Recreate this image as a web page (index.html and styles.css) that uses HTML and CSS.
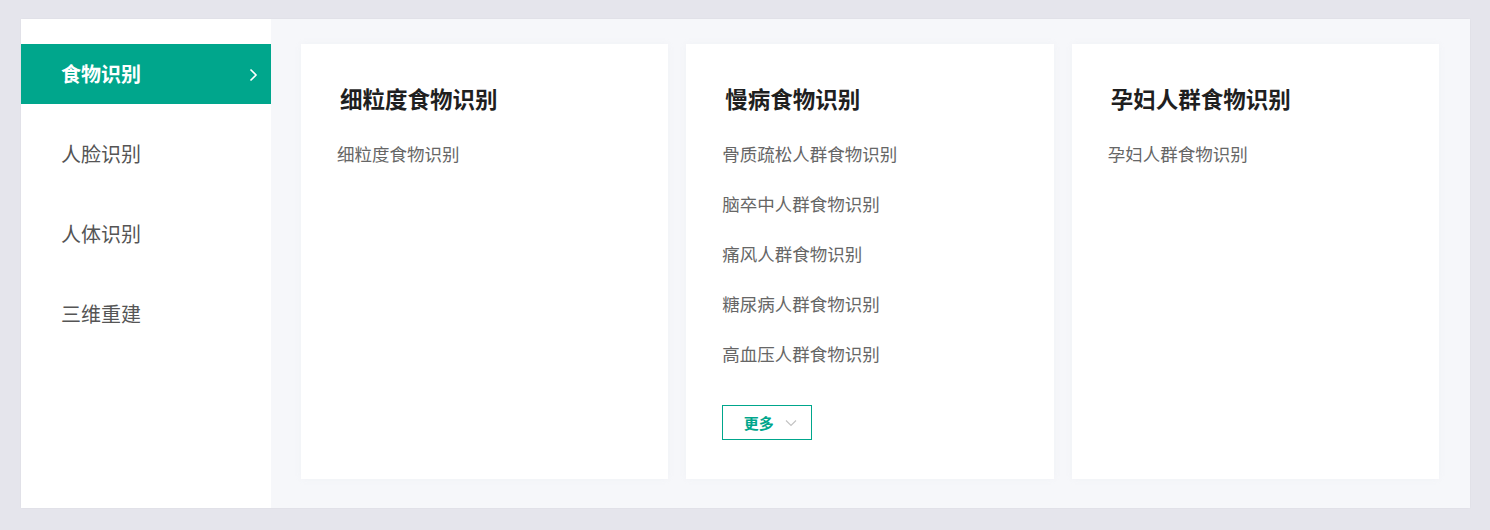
FILE: index.html
```html
<!DOCTYPE html>
<html lang="zh">
<head>
<meta charset="utf-8">
<title>识别</title>
<link rel="stylesheet" href="styles.css">
</head>
<body>
<div class="panel">
  <nav class="side">
    <div class="side-item active"><span>食物识别</span>
      <svg class="chev" width="10" height="14" viewBox="0 0 10 14"><path d="M2.5 1.5 L8 7 L2.5 12.5" fill="none" stroke="#fff" stroke-width="1.6"/></svg>
    </div>
    <div class="side-item"><span>人脸识别</span></div>
    <div class="side-item"><span>人体识别</span></div>
    <div class="side-item"><span>三维重建</span></div>
  </nav>
  <main class="main">
    <section class="card">
      <h3 class="card-title">细粒度食物识别</h3>
      <ul class="list">
        <li>细粒度食物识别</li>
      </ul>
    </section>
    <section class="card">
      <h3 class="card-title">慢病食物识别</h3>
      <ul class="list">
        <li>骨质疏松人群食物识别</li>
        <li>脑卒中人群食物识别</li>
        <li>痛风人群食物识别</li>
        <li>糖尿病人群食物识别</li>
        <li>高血压人群食物识别</li>
      </ul>
      <button class="more">更多
        <svg width="12" height="8" viewBox="0 0 12 8"><path d="M1 1.5 L6 6.5 L11 1.5" fill="none" stroke="#c4c4c4" stroke-width="1.2"/></svg>
      </button>
    </section>
    <section class="card">
      <h3 class="card-title">孕妇人群食物识别</h3>
      <ul class="list">
        <li>孕妇人群食物识别</li>
      </ul>
    </section>
  </main>
</div>
</body>
</html>
```
FILE: styles.css
```css
* { box-sizing: border-box; }
html, body { margin: 0; }
body {
  background: #e5e5ec;
  padding: 19px 20px 22px 21px;
  font-family: "Noto Sans CJK SC", "Noto Sans", sans-serif;
  height: 530px;
  overflow: hidden;
}
.panel {
  display: flex;
  width: 1449px;
  height: 489px;
  background: #f6f7fa;
  box-shadow: 0 0 2px rgba(0,0,0,0.05);
}
.side {
  width: 250px;
  background: #fff;
  padding-top: 25px;
  display: flex;
  flex-direction: column;
  gap: 20px;
}
.side-item {
  height: 60px;
  display: flex;
  align-items: center;
  justify-content: space-between;
  padding: 0 13px 0 40px;
  font-size: 20px;
  color: #555;
  line-height: 1;
}
.side-item.active {
  background: #00a68c;
  color: #fff;
  font-weight: 700;
}
.chev { margin-top: 1px; }
.main {
  flex: 1;
  padding: 25px 31px 29px 30px;
  display: grid;
  grid-template-columns: repeat(3, 1fr);
  gap: 18px;
}
.card {
  background: #fff;
  padding: 39px 36px 0 36px;
  box-shadow: 0 0 6px rgba(200,205,215,0.12);
}
.card-title {
  margin: 0 0 15px;
  padding-left: 3px;
  font-size: 22.5px;
  line-height: 31px;
  font-weight: 700;
  color: #1f1f1f;
}
.list {
  list-style: none;
  margin: 0;
  padding: 0;
}
.list li {
  height: 50px;
  line-height: 50px;
  font-size: 17.5px;
  color: #666;
}
.more {
  margin-top: 26px;
  width: 90px;
  height: 35px;
  border: 1px solid #00a68c;
  background: #fff;
  color: #00a68c;
  font-family: inherit;
  font-size: 15px;
  font-weight: 700;
  display: flex;
  align-items: center;
  justify-content: center;
  gap: 11px;
  padding: 0 0 0 6px;
}
```
